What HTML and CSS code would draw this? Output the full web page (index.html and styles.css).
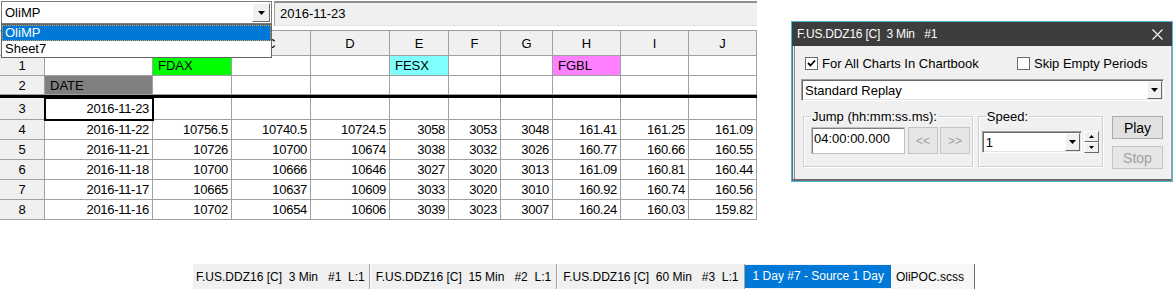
FILE: index.html
```html
<!DOCTYPE html>
<html>
<head>
<meta charset="utf-8">
<link rel="stylesheet" href="styles.css">
</head>
<body>
<div class="screen">
  <div class="toolbar">
    <div class="sheet-combo">
      <span class="combo-text">OliMP</span>
      <span class="combo-btn"><svg width="7" height="4" viewBox="0 0 7 4"><path d="M0 0H7L3.5 4Z" fill="#000"/></svg></span>
    </div>
    <div class="formula">2016-11-23</div>
  </div>

  <div class="sheet">
    <div class="h"></div><div class="h">A</div><div class="h">B</div><div class="h">C</div><div class="h">D</div><div class="h">E</div><div class="h">F</div><div class="h">G</div><div class="h">H</div><div class="h">I</div><div class="h">J</div>

    <div class="rh">1</div><div></div><div class="lbl fdax">FDAX</div><div></div><div></div><div class="lbl fesx">FESX</div><div></div><div></div><div class="lbl fgbl">FGBL</div><div></div><div></div>

    <div class="rh">2</div><div class="lbl date">DATE</div><div></div><div></div><div></div><div></div><div></div><div></div><div></div><div></div><div></div>

    <div class="thick"></div>

    <div class="rh">3</div><div class="n sel">2016-11-23</div><div></div><div></div><div></div><div></div><div></div><div></div><div></div><div></div><div></div>

    <div class="rh">4</div><div class="n">2016-11-22</div><div class="n">10756.5</div><div class="n">10740.5</div><div class="n">10724.5</div><div class="n">3058</div><div class="n">3053</div><div class="n">3048</div><div class="n">161.41</div><div class="n">161.25</div><div class="n">161.09</div>

    <div class="rh">5</div><div class="n">2016-11-21</div><div class="n">10726</div><div class="n">10700</div><div class="n">10674</div><div class="n">3038</div><div class="n">3032</div><div class="n">3026</div><div class="n">160.77</div><div class="n">160.66</div><div class="n">160.55</div>

    <div class="rh">6</div><div class="n">2016-11-18</div><div class="n">10700</div><div class="n">10666</div><div class="n">10646</div><div class="n">3027</div><div class="n">3020</div><div class="n">3013</div><div class="n">161.09</div><div class="n">160.81</div><div class="n">160.44</div>

    <div class="rh">7</div><div class="n">2016-11-17</div><div class="n">10665</div><div class="n">10637</div><div class="n">10609</div><div class="n">3033</div><div class="n">3020</div><div class="n">3010</div><div class="n">160.92</div><div class="n">160.74</div><div class="n">160.56</div>

    <div class="rh">8</div><div class="n">2016-11-16</div><div class="n">10702</div><div class="n">10654</div><div class="n">10606</div><div class="n">3039</div><div class="n">3023</div><div class="n">3007</div><div class="n">160.24</div><div class="n">160.03</div><div class="n">159.82</div>
  </div>

  <div class="tabs">
    <div class="tab first">F.US.DDZ16 [C]  3 Min   #1  L:1</div>
    <div class="tab">F.US.DDZ16 [C]  15 Min   #2  L:1</div>
    <div class="tab">F.US.DDZ16 [C]  60 Min   #3  L:1</div>
    <div class="tab active">1 Day #7 - Source 1 Day</div>
    <div class="tab file">OliPOC.scss</div>
  </div>

  <ul class="dropdown">
    <li class="picked">OliMP</li>
    <li>Sheet7</li>
  </ul>

  <div class="dialog">
    <div class="titlebar">
      <span class="title">F.US.DDZ16 [C]  3 Min   #1</span>
      <svg class="close" width="11" height="11" viewBox="0 0 11 11"><path d="M0.5 0.5L10.5 10.5M10.5 0.5L0.5 10.5" stroke="#fff" stroke-width="1.1"/></svg>
    </div>
    <div class="dlg-body">
      <div class="checks">
        <label class="check first"><span class="box"><svg width="9" height="9" viewBox="0 0 9 9"><path d="M1 4L3.5 6.5L8 1.5" fill="none" stroke="#000" stroke-width="1.8"/></svg></span>For All Charts In Chartbook</label>
        <label class="check"><span class="box"></span>Skip Empty Periods</label>
      </div>
      <div class="combo mode">
        <span class="combo-text">Standard Replay</span>
        <span class="drop-btn"><svg width="7" height="4" viewBox="0 0 7 4"><path d="M0 0H7L3.5 4Z" fill="#000"/></svg></span>
      </div>
      <div class="controls">
        <fieldset class="group jump">
          <legend>Jump (hh:mm:ss.ms):</legend>
          <div class="group-row">
            <div class="time">04:00:00.000</div>
            <div class="btn disabled small">&lt;&lt;</div>
            <div class="btn disabled small">&gt;&gt;</div>
          </div>
        </fieldset>
        <fieldset class="group speed">
          <legend>Speed:</legend>
          <div class="group-row">
            <div class="combo speed-combo">
              <span class="combo-text">1</span>
              <span class="drop-btn"><svg width="7" height="4" viewBox="0 0 7 4"><path d="M0 0H7L3.5 4Z" fill="#000"/></svg></span>
            </div>
            <div class="spin">
              <span class="spin-btn"><svg width="5" height="3" viewBox="0 0 5 3"><path d="M0 3H5L2.5 0Z" fill="#000"/></svg></span>
              <span class="spin-btn"><svg width="5" height="3" viewBox="0 0 5 3"><path d="M0 0H5L2.5 3Z" fill="#000"/></svg></span>
            </div>
          </div>
        </fieldset>
        <div class="actions">
          <div class="btn play">Play</div>
          <div class="btn disabled stop">Stop</div>
        </div>
      </div>
    </div>
  </div>
</div>
</body>
</html>
```

FILE: styles.css
```css
html, body {
  margin: 0;
  padding: 0;
  background: #fff;
}
body {
  font-family: "Liberation Sans", Arial, sans-serif;
  font-size: 13px;
  color: #000;
}
.screen {
  position: relative;
  width: 1176px;
  height: 297px;
  overflow: hidden;
}

/* top toolbar */
.toolbar {
  display: flex;
  width: 757px;
  height: 27px;
}
.sheet-combo {
  margin: 1px 0 0 1px;
  width: 271px;
  height: 23px;
  box-sizing: border-box;
  border: 1px solid #7a7a7a;
  background: #fff;
  display: flex;
  align-items: center;
}
.combo-text {
  flex: 1;
  padding-left: 3px;
  white-space: nowrap;
}
.combo-btn {
  width: 18px;
  height: 19px;
  margin-right: 1px;
  box-sizing: border-box;
  background: #f0f0f0;
  border: 1px solid;
  border-color: #fff #696969 #696969 #fff;
  display: flex;
  align-items: center;
  justify-content: center;
}
.formula {
  margin: 1px 0 0 2px;
  flex: 1;
  height: 25px;
  box-sizing: border-box;
  border-top: 2px solid #8f8f8f;
  border-left: 1px solid #a0a0a0;
  border-bottom: 1px solid #e3e3e3;
  background: #f0f0f0;
  padding: 3px 0 0 5px;
}

/* spreadsheet grid */
.sheet {
  margin-top: 3px;
  width: 757px;
  display: grid;
  grid-template-columns: 45px 108px 79px 79px 79px 59px 52px 52px 68px 68px 68px;
  grid-template-rows: 25px 20px 19px 3px 22px 20px 20px 20px 20px 20px;
  border-top: 1px solid #a0a0a0;
}
.sheet > div {
  box-sizing: border-box;
  border-right: 1px solid #a0a0a0;
  border-bottom: 1px solid #a0a0a0;
  display: flex;
  align-items: center;
  padding: 0 3px;
  white-space: nowrap;
  overflow: hidden;
  letter-spacing: -0.3px;
}
.sheet > .h,
.sheet > .rh {
  background: #f0f0f0;
  justify-content: center;
  letter-spacing: 0;
}
.sheet > .n {
  justify-content: flex-end;
}
.sheet > .lbl {
  padding-left: 5px;
  letter-spacing: 0;
}
.sheet > .fdax { background: #00ff00; }
.sheet > .fesx { background: #80ffff; }
.sheet > .fgbl { background: #ff80ff; }
.sheet > .date { background: #808080; }
.sheet > .thick {
  grid-column: 1 / -1;
  background: #000;
  border: none;
}
.sheet > .sel {
  overflow: visible;
  outline: 2px solid #000;
  outline-offset: -1px;
  z-index: 1;
}

/* dropdown list */
.dropdown {
  position: absolute;
  left: 1px;
  top: 24px;
  width: 271px;
  box-sizing: border-box;
  margin: 0;
  padding: 0;
  list-style: none;
  background: #fff;
  border: 1px solid #646464;
}
.dropdown li {
  height: 16px;
  line-height: 16px;
  padding-left: 3px;
}
.dropdown li.picked {
  background: #0078d7;
  color: #fff;
  outline: 1px dotted #e8a040;
  outline-offset: -1px;
}

/* bottom tabs */
.tabs {
  display: flex;
  width: fit-content;
  height: 25px;
  margin: 44px 0 0 193px;
  background: #f0f0f0;
  font-size: 12px;
  white-space: pre;
}
.tab {
  display: flex;
  align-items: center;
  padding: 0 5px 0 6px;
  border-right: 1px solid #a0a0a0;
  box-shadow: 1px 0 0 #fff;
}
.tab.first {
  padding-left: 3px;
  padding-right: 4px;
}
.tab.active {
  background: #0078d7;
  color: #fff;
  align-items: flex-start;
  padding: 4px 7px 0 8px;
  height: 23px;
  margin-top: 1px;
  box-sizing: border-box;
  border-right: none;
  box-shadow: none;
}
.tab.file {
  background: #f7f7f7;
  border-left: 1px solid #fff;
  border-right: 1px solid #6d6d6d;
  padding: 0 10px 0 4px;
}

/* replay dialog */
.dialog {
  position: absolute;
  left: 791px;
  top: 21px;
  width: 382px;
  height: 161px;
  box-sizing: border-box;
  border: 1px solid #4cb8d4;
  background: #f0f0f0;
  display: flex;
  flex-direction: column;
}
.titlebar {
  flex: none;
  height: 24px;
  background: #3d3d3d;
  color: #fff;
  display: flex;
  align-items: center;
  justify-content: space-between;
  padding: 0 9px 0 5px;
  font-size: 12px;
  letter-spacing: -0.2px;
  white-space: pre;
}
.dlg-body {
  flex: 1;
  box-sizing: border-box;
  border-left: 1px solid #6b6b6b;
  box-shadow: inset 1px 0 0 #f0f0f0, inset 2px 0 0 #8a8a8a;
  border-right: 1px solid #a0a0a0;
  border-bottom: 2px solid #6b6b6b;
  padding: 11px 8px 0 8px;
}
.checks {
  display: flex;
  height: 13px;
  margin-left: 4px;
}
.check {
  display: flex;
  align-items: center;
  white-space: nowrap;
}
.check.first {
  width: 212px;
}
.box {
  width: 13px;
  height: 13px;
  box-sizing: border-box;
  border: 1px solid #6a6a6a;
  background: #fff;
  margin-right: 4px;
  display: flex;
  align-items: center;
  justify-content: center;
}
.combo {
  display: flex;
  align-items: center;
  box-sizing: border-box;
  background: #fff;
  border: 1px solid;
  border-color: #a0a0a0 #fff #fff #a0a0a0;
  box-shadow: inset 1px 1px 0 #696969, inset -1px -1px 0 #e3e3e3;
}
.mode {
  margin-top: 9px;
  width: 363px;
  height: 22px;
}
.drop-btn {
  width: 15px;
  height: 18px;
  margin-right: 1px;
  box-sizing: border-box;
  background: #f0f0f0;
  border: 1px solid;
  border-color: #fff #696969 #696969 #fff;
  display: flex;
  align-items: center;
  justify-content: center;
}
.controls {
  display: flex;
  align-items: flex-start;
  margin-top: 8px;
}
.group {
  margin: 0;
  padding: 0 0 12px 7px;
  border: 1px solid #d0d0d0;
  box-shadow: inset 1px 1px 0 #fff, 1px 1px 0 #fff;
  box-sizing: border-box;
  height: 58px;
}
.group legend {
  padding: 0 1px;
  margin-left: 0;
  line-height: 15px;
  white-space: nowrap;
}
.speed legend {
  margin-left: 4px;
}
.group-row {
  display: flex;
  align-items: flex-start;
}
.jump {
  margin-left: 2px;
  width: 171px;
}
.time {
  width: 94px;
  height: 27px;
  box-sizing: border-box;
  background: #fff;
  border: 1px solid #c0c0c0;
  box-shadow: inset 1px 1px 0 #808080;
  padding: 3px 0 0 2px;
  margin-top: 3px;
}
.btn {
  box-sizing: border-box;
  display: flex;
  align-items: center;
  justify-content: center;
  background: #e1e1e1;
  border: 1px solid #adadad;
  color: #000;
}
.btn.disabled {
  color: #a0a0a0;
  border-color: #c4c4c4;
  background: #e6e6e6;
}
.small {
  width: 30px;
  height: 27px;
  margin: 3px 0 0 3px;
  font-size: 12px;
}
.small + .small {
  margin-left: 2px;
}
.speed {
  margin-left: 5px;
  width: 126px;
  padding-left: 3px;
}
.speed-combo {
  width: 100px;
  height: 22px;
  margin-top: 7px;
}
.spin {
  margin: 7px 0 0 2px;
  width: 15px;
  height: 22px;
  display: flex;
  flex-direction: column;
}
.spin-btn {
  flex: 1;
  box-sizing: border-box;
  background: #f0f0f0;
  border: 1px solid;
  border-color: #fff #696969 #696969 #fff;
  display: flex;
  align-items: center;
  justify-content: center;
}
.actions {
  margin-left: 9px;
  display: flex;
  flex-direction: column;
  gap: 7px;
  padding-top: 7px;
}
.actions .btn {
  width: 51px;
  height: 23px;
  font-size: 14px;
}
```
